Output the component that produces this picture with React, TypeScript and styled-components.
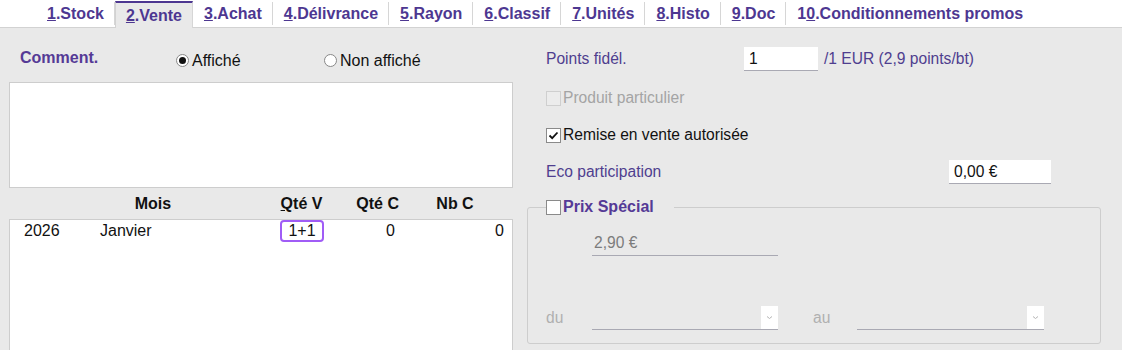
import React from "react";
import styled, { createGlobalStyle } from "styled-components";

const GlobalStyle = createGlobalStyle`
  html, body {
    margin:0;
    padding:0;
    background:#e9e9e9;
    font-family:"Liberation Sans", Arial, sans-serif;
    font-size:16px;
  }
`;

const Wrapper = styled.div`
  width:1122px;
  height:350px;
  overflow:hidden;
  background:#e9e9e9;
`;

const TabBar = styled.div`
  display:flex;
  align-items:flex-end;
  height:28px;
  padding-left:36px;
  background:#fff;
  border-bottom:1px solid #d2d2d2;
  box-sizing:border-box;
`;

const Tab = styled.div<{ $active?: boolean; $last?: boolean }>`
  height:${(p) => (p.$active ? "27px" : "23px")};
  margin-bottom:${(p) => (p.$active ? "-1px" : "2px")};
  display:flex;
  align-items:center;
  padding:0 10px;
  box-sizing:border-box;
  font-weight:bold;
  font-size:16px;
  color:#4d3791;
  background:${(p) => (p.$active ? "#e9e9e9" : "transparent")};
  border-top:${(p) => (p.$active ? "2px solid #4d3791" : "none")};
  border-left:1px solid ${(p) => (p.$active ? "#d2d2d2" : "transparent")};
  border-right:1px solid ${(p) => (p.$last ? "transparent" : "#d6d6d6")};
  & u { text-decoration:underline; }
`;

const Body = styled.div`
  display:flex;
  align-items:flex-start;
  gap:14px;
  padding-left:9px;
`;

const LeftPanel = styled.div`
  width:504px;
  display:flex;
  flex-direction:column;
`;

const CommentRow = styled.div`
  height:54px;
  display:flex;
  align-items:center;
  padding-left:11px;
  padding-top:8px;
  box-sizing:border-box;
`;

const PurpleTitle = styled.span`
  font-weight:bold;
  color:#553a96;
  font-size:16px;
  width:156px;
  margin-top:-3px;
`;

const RadioLabel = styled.label<{ $w?: number }>`
  display:flex;
  align-items:center;
  gap:3px;
  width:${(p) => (p.$w ? p.$w + "px" : "auto")};
  color:#111;
  margin-top:3px;
`;

const RadioDot = styled.span<{ $on?: boolean }>`
  width:11px;
  height:11px;
  border-radius:50%;
  border:1px solid #888;
  background:#fff;
  display:inline-flex;
  align-items:center;
  justify-content:center;
  &::after {
    content:"";
    display:${(p) => (p.$on ? "block" : "none")};
    width:7px;
    height:7px;
    border-radius:50%;
    background:#111;
  }
`;

const TextBox = styled.div`
  height:106px;
  background:#fff;
  border:1px solid #cdcdcd;
  box-sizing:border-box;
`;

const Grid = styled.div`
  display:grid;
  grid-template-columns:81px 126px 64px 43px 78px 108px;
`;

const HeadRow = styled(Grid)`
  height:31px;
  align-items:center;
  font-weight:bold;
  color:#111;
`;

const HeadCell = styled.div<{ $align?: string }>`
  text-align:${(p) => p.$align || "center"};
  padding-top:1px;
`;

const TableBody = styled.div`
  flex-shrink:0;
  height:150px;
  background:#fff;
  border:1px solid #cdcdcd;
  border-bottom:none;
  box-sizing:border-box;
`;

const DataRow = styled(Grid)`
  height:22px;
  align-items:center;
  color:#111;
`;

const Cell = styled.div<{ $align?: string; $pad?: number }>`
  text-align:${(p) => p.$align || "left"};
  padding-left:${(p) => (p.$align === "right" ? 0 : p.$pad ?? 0)}px;
  padding-right:${(p) => (p.$align === "right" ? p.$pad ?? 0 : 0)}px;
`;

const EditCell = styled.div`
  height:22px;
  border:2.5px solid #a05cf6;
  border-radius:4px;
  box-sizing:border-box;
  display:flex;
  align-items:center;
  justify-content:center;
  margin-left:-1px;
`;

const RightPanel = styled.div`
  width:574px;
  display:flex;
  flex-direction:column;
  padding-top:19px;
  font-size:15.6px;
`;

const FieldRow = styled.div<{ $mt?: number }>`
  display:flex;
  align-items:center;
  height:24px;
  padding-left:19px;
  margin-top:${(p) => p.$mt ?? 0}px;
`;

const Label = styled.span<{ $w?: number }>`
  color:#4f3e8f;
  width:${(p) => (p.$w ? p.$w + "px" : "auto")};
  flex-shrink:0;
`;

const Input = styled.div<{ $w: number }>`
  width:${(p) => p.$w}px;
  height:24px;
  background:#fff;
  border-bottom:1px solid #a9a9b3;
  box-sizing:border-box;
  padding-left:5px;
  display:flex;
  align-items:center;
  color:#111;
`;

const Note = styled.span`
  color:#4f3e8f;
  margin-left:6px;
`;

const Check = styled.span<{ $on?: boolean; $disabled?: boolean }>`
  width:13px;
  height:13px;
  border:1px solid ${(p) => (p.$disabled ? "#cfcfcf" : "#8a8a8a")};
  background:${(p) => (p.$disabled ? "#ececec" : "#fff")};
  display:inline-flex;
  align-items:center;
  justify-content:center;
  margin-right:2px;
  flex-shrink:0;
`;

const CheckText = styled.span<{ $disabled?: boolean }>`
  color:${(p) => (p.$disabled ? "#a4a4a4" : "#111")};
`;

const Fieldset = styled.fieldset`
  margin:14px 0 0 0;
  padding:0 0 0 18px;
  height:146px;
  box-sizing:border-box;
  border:1px solid #cdcdcd;
  border-radius:3px;
  display:flex;
  flex-direction:column;
`;

const Legend = styled.legend`
  display:flex;
  align-items:center;
  padding:0 20px 0 0;
  margin-left:0;
  font-weight:bold;
  font-size:16px;
  color:#553a96;
`;

const PriceLine = styled.div`
  margin:14px 0 0 46px;
  width:186px;
  height:26px;
  border-bottom:1px solid #a9a9b3;
  color:#7c7c7c;
  display:flex;
  align-items:center;
  padding-left:2px;
  box-sizing:border-box;
`;

const DateRow = styled.div`
  display:flex;
  align-items:center;
  margin-top:50px;
`;

const DateLabel = styled.span<{ $gap?: number }>`
  color:#b0b0b0;
  width:46px;
  margin-left:${(p) => p.$gap ?? 0}px;
`;

const Select = styled.div<{ $w?: number }>`
  width:${(p) => p.$w ?? 186}px;
  height:24px;
  border-bottom:1px solid #a9a9b3;
  display:flex;
  justify-content:flex-end;
  box-sizing:border-box;
`;

const SelectButton = styled.div`
  width:17px;
  height:23px;
  background:#fff;
  display:flex;
  align-items:center;
  justify-content:center;
`;

const tabs = [
  ["1", ".Stock"],
  ["2", ".Vente"],
  ["3", ".Achat"],
  ["4", ".Délivrance"],
  ["5", ".Rayon"],
  ["6", ".Classif"],
  ["7", ".Unités"],
  ["8", ".Histo"],
  ["9", ".Doc"],
];

function Tick() {
  return (
    <svg width="11" height="11" viewBox="0 0 11 11">
      <path d="M1.5 5.5 L4.2 8.2 L9.5 2.5" fill="none" stroke="#111" strokeWidth="1.8" />
    </svg>
  );
}

function Chevron() {
  return (
    <svg width="7" height="5" viewBox="0 0 7 5">
      <path d="M1 1.5 L3.5 3.5 L6 1.5" fill="none" stroke="#b5b5b5" strokeWidth="1" />
    </svg>
  );
}

export default function App() {
  return (
    <Wrapper>
      <GlobalStyle />
      <TabBar>
        {tabs.map(([n, t]) => (
          <Tab key={n} $active={n === "2"}>
            <u>{n}</u>
            {t}
          </Tab>
        ))}
        <Tab $last>
          1<u>0</u>.Conditionnements promos
        </Tab>
      </TabBar>

      <Body>
        <LeftPanel>
          <CommentRow>
            <PurpleTitle>Comment.</PurpleTitle>
            <RadioLabel $w={148}>
              <RadioDot $on />
              Affiché
            </RadioLabel>
            <RadioLabel>
              <RadioDot />
              Non affiché
            </RadioLabel>
          </CommentRow>
          <TextBox />
          <HeadRow>
            <div />
            <HeadCell>Mois</HeadCell>
            <div />
            <HeadCell>
              <u>Q</u>té V
            </HeadCell>
            <HeadCell $align="right" style={{ paddingRight: 2 }}>Qté C</HeadCell>
            <HeadCell>Nb C</HeadCell>
          </HeadRow>
          <TableBody>
            <DataRow>
              <Cell $pad={14}>2026</Cell>
              <Cell $pad={9}>Janvier</Cell>
              <div />
              <EditCell>1+1</EditCell>
              <Cell $align="right" $pad={7}>0</Cell>
              <Cell $align="right" $pad={6}>0</Cell>
            </DataRow>
          </TableBody>
        </LeftPanel>

        <RightPanel>
          <FieldRow>
            <Label $w={198}>Points fidél.</Label>
            <Input $w={74}>1</Input>
            <Note>/1 EUR (2,9 points/bt)</Note>
          </FieldRow>
          <FieldRow $mt={15}>
            <Check $disabled />
            <CheckText $disabled>Produit particulier</CheckText>
          </FieldRow>
          <FieldRow $mt={13}>
            <Check $on>
              <Tick />
            </Check>
            <CheckText>Remise en vente autorisée</CheckText>
          </FieldRow>
          <FieldRow $mt={13}>
            <Label $w={403}>Eco participation</Label>
            <Input $w={102}>0,00 €</Input>
          </FieldRow>
          <Fieldset>
            <Legend>
              <Check />
              Prix Spécial
            </Legend>
            <PriceLine>2,90 €</PriceLine>
            <DateRow>
              <DateLabel>du</DateLabel>
              <Select>
                <SelectButton>
                  <Chevron />
                </SelectButton>
              </Select>
              <DateLabel $gap={35} style={{ width: 44 }}>au</DateLabel>
              <Select $w={187}>
                <SelectButton>
                  <Chevron />
                </SelectButton>
              </Select>
            </DateRow>
          </Fieldset>
        </RightPanel>
      </Body>
    </Wrapper>
  );
}
